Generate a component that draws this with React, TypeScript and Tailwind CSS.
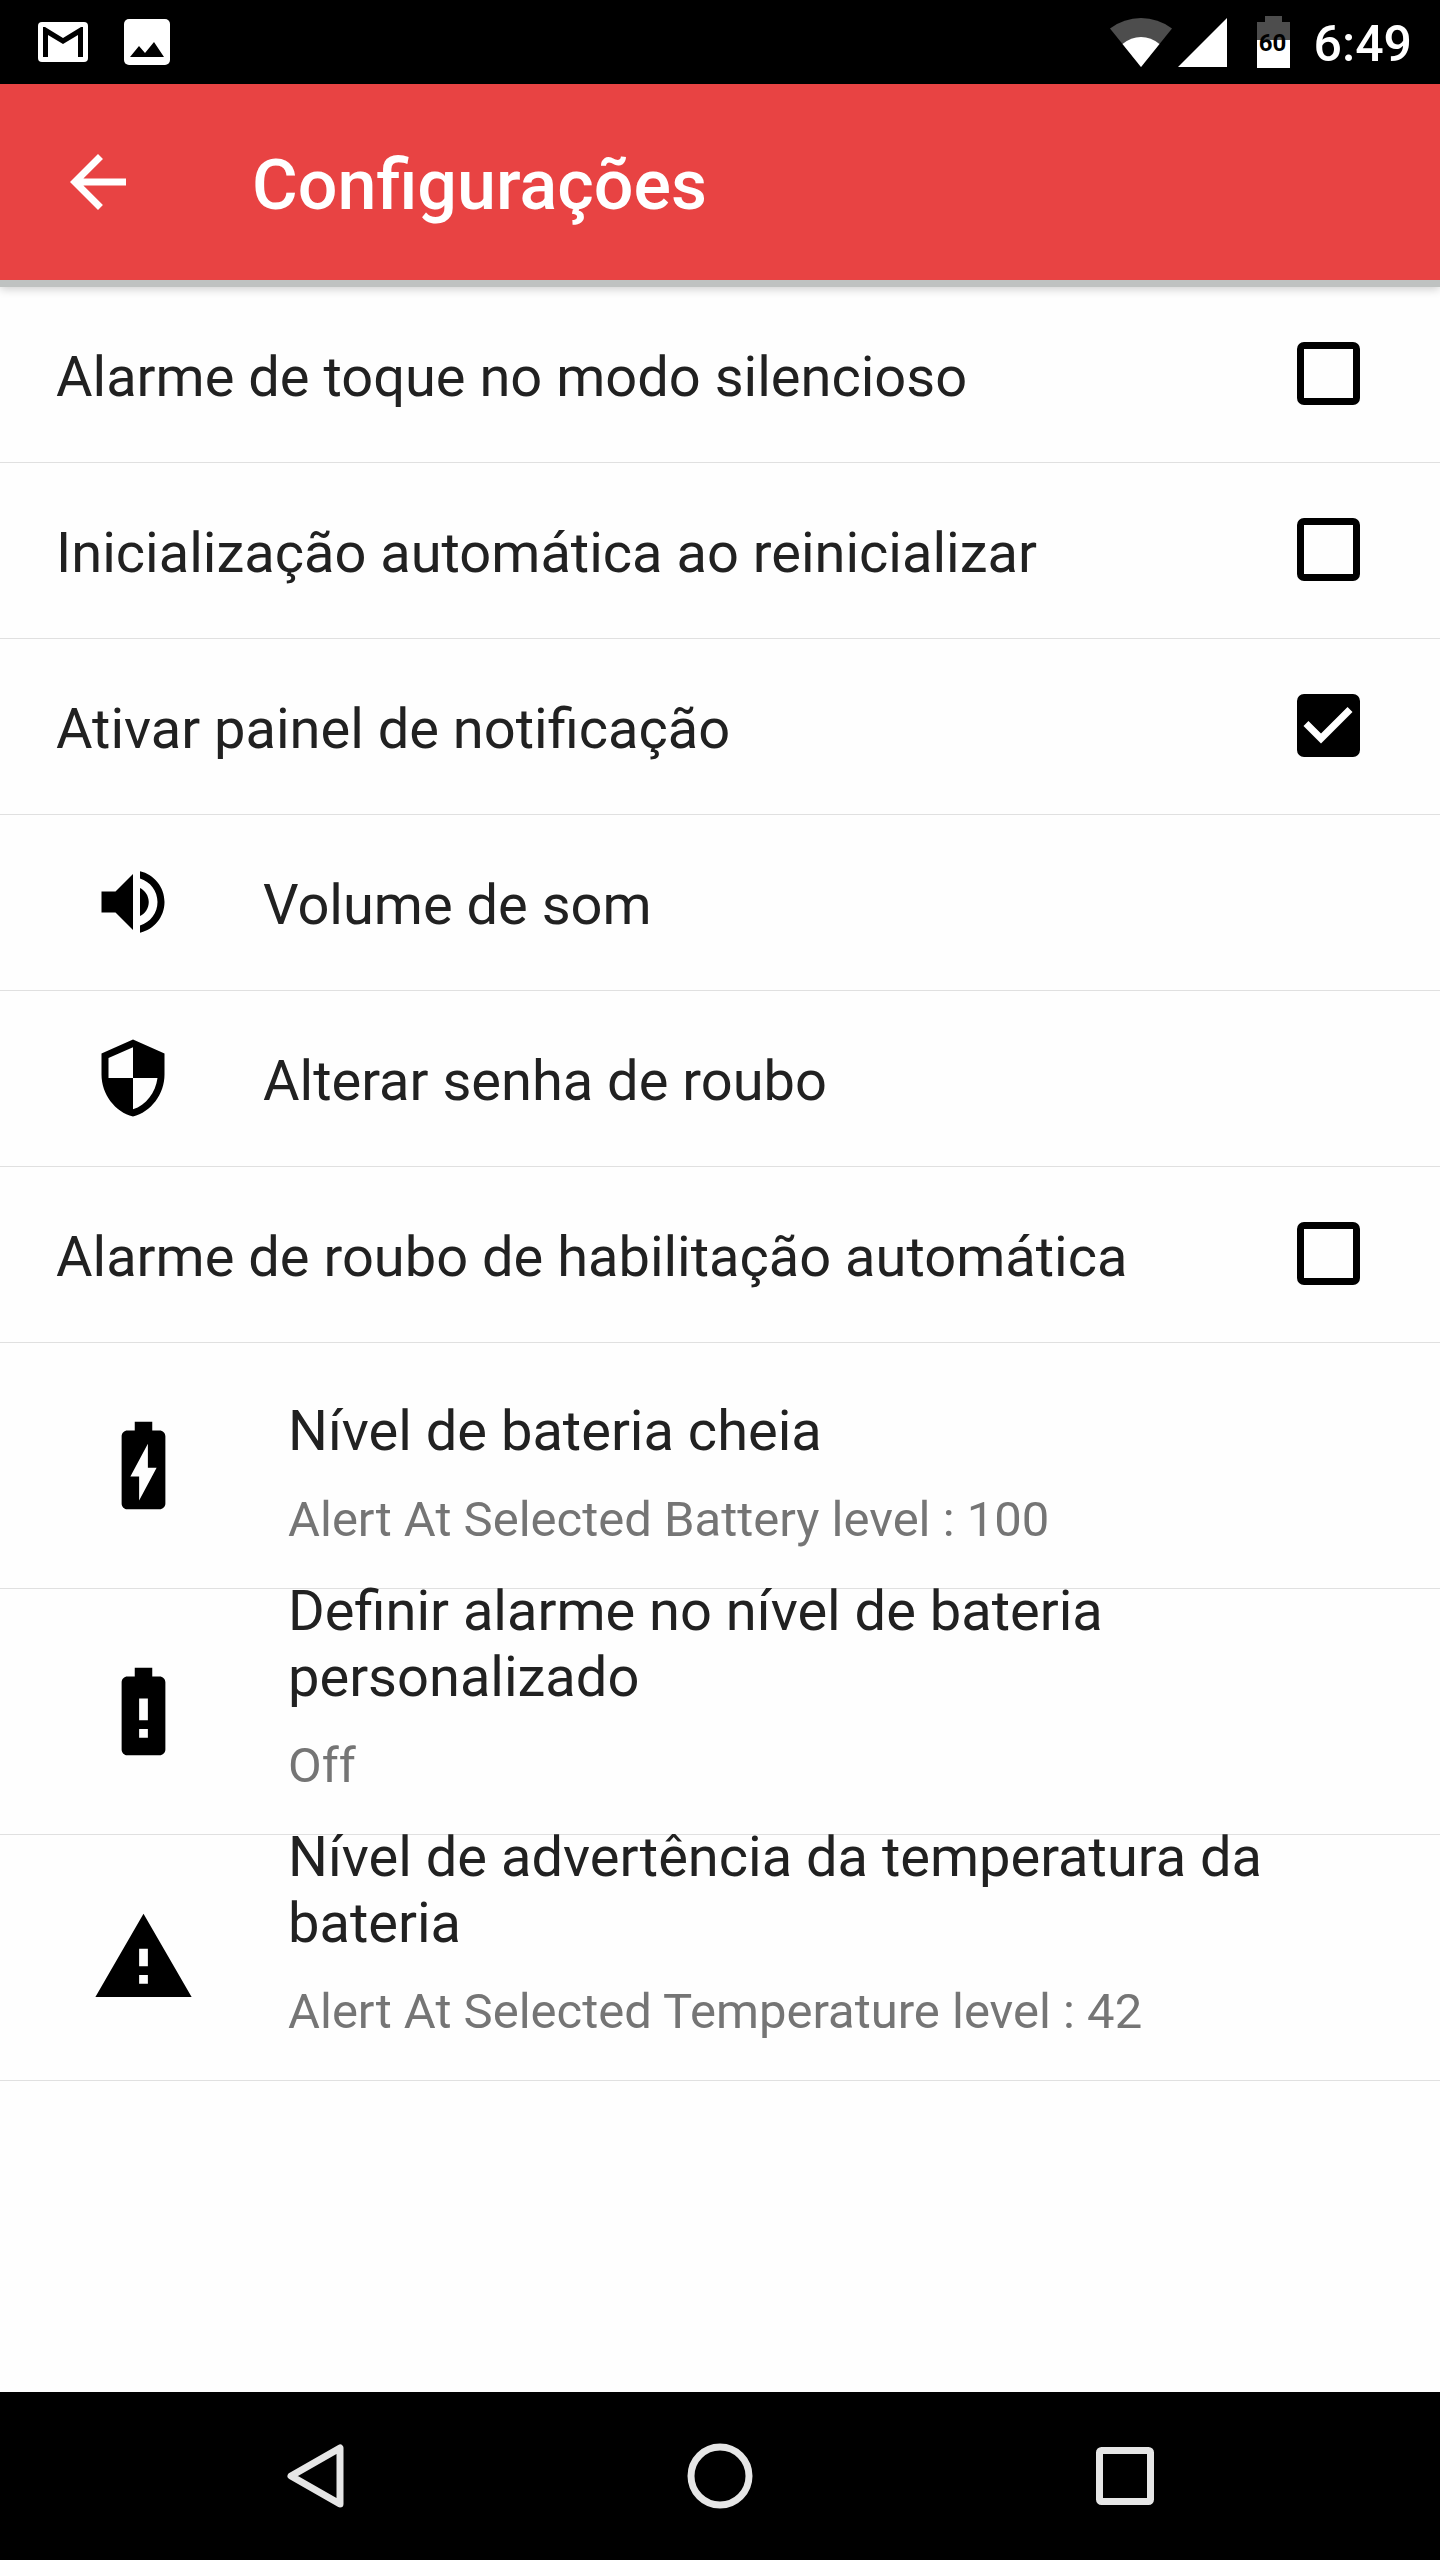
import { useState } from "react";
import type { ReactNode } from "react";

interface IconProps {
  path: string;
  className: string;
}

interface CheckItem {
  id: string;
  label: string;
}

const ICONS = {
  back: "M20 11H7.83l5.59-5.59L12 4l-8 8 8 8 1.41-1.41L7.83 13H20v-2z",
  check: "M10 17l-5-5 1.41-1.41L10 14.17l7.59-7.59L19 8l-9 9z",
  volume:
    "M3 9v6h4l5 5V4L7 9H3zm13.5 3c0-1.77-1.02-3.29-2.5-4.03v8.05c1.48-.73 2.5-2.25 2.5-4.02zM14 3.23v2.06c2.89.86 5 3.54 5 6.71s-2.11 5.85-5 6.71v2.06c4.01-.91 7-4.49 7-8.77s-2.99-7.86-7-8.77z",
  shield:
    "M12 1L3 5v6c0 5.55 3.84 10.74 9 12 5.16-1.26 9-6.45 9-12V5l-9-4zm0 10.99h7c-.53 4.12-3.28 7.79-7 8.94V12H5V6.3l7-3.11v8.8z",
  batteryCharging:
    "M15.67 4H14V2h-4v2H8.33C7.6 4 7 4.6 7 5.33v15.33C7 21.4 7.6 22 8.33 22h7.33c.74 0 1.34-.6 1.34-1.33V5.33C17 4.6 16.4 4 15.67 4zM11 20v-5.5H9L13 7v5.5h2L11 20z",
  batteryAlert:
    "M15.67 4H14V2h-4v2H8.33C7.6 4 7 4.6 7 5.33v15.33C7 21.4 7.6 22 8.33 22h7.33c.74 0 1.34-.6 1.34-1.33V5.33C17 4.6 16.4 4 15.67 4zM13 18h-2v-2h2v2zm0-4h-2V9h2v5z",
  warning: "M1 21h22L12 2 1 21zm12-3h-2v-2h2v2zm0-4h-2v-4h2v4z",
};

const SOUND_CHECKS: CheckItem[] = [
  { id: "silent-ring", label: "Alarme de toque no modo silencioso" },
  { id: "auto-start", label: "Inicialização automática ao reinicializar" },
  { id: "notification-panel", label: "Ativar painel de notificação" },
];

const LEVELS = [
  {
    icon: ICONS.batteryCharging,
    title: "Nível de bateria cheia",
    summary: "Alert At Selected Battery level : 100",
  },
  {
    icon: ICONS.batteryAlert,
    title: "Definir alarme no nível de bateria personalizado",
    summary: "Off",
  },
  {
    icon: ICONS.warning,
    title: "Nível de advertência da temperatura da bateria",
    summary: "Alert At Selected Temperature level : 42",
  },
];

function Icon({ path, className }: IconProps) {
  return (
    <svg aria-hidden="true" viewBox="0 0 24 24" fill="currentColor" className={`shrink-0 ${className}`}>
      <path d={path} />
    </svg>
  );
}

function StatusBar() {
  return (
    <div className="flex h-[84px] items-center justify-between bg-black pr-7 pl-[38px] text-white">
      <div className="flex items-center gap-9">
        {/* Mail */}
        <svg aria-hidden="true" viewBox="0 0 50 40" className="h-10 w-[50px]">
          <rect width="50" height="40" rx="4" fill="white" />
          <path d="M5 35V5h2l18 11L43 5h2v30h-5V13L25 22 10 13v22z" fill="black" />
        </svg>
        {/* Picture */}
        <svg aria-hidden="true" viewBox="0 0 46 46" className="size-[46px]">
          <rect width="46" height="46" rx="5" fill="white" />
          <path d="M6 38l9-11 6 7 9-11 10 15z" fill="black" />
        </svg>
      </div>

      <div className="flex items-center">
        {/* Wi-Fi */}
        <svg aria-hidden="true" viewBox="0 0 62 50" className="h-[50px] w-[62px]">
          <path d="M31 50L0 11.500Q14 1 31 1t31 10.500z" fill="#4d4d4d" />
          <path d="M31 50L12.500 27Q21 20 31 20t18.500 7z" fill="white" />
        </svg>
        {/* Mobile signal */}
        <svg aria-hidden="true" viewBox="0 0 50 50" className="ml-1.5 size-[50px]">
          <path d="M0 50L49 1v49z" fill="white" />
        </svg>
        {/* Battery */}
        <div className="relative ml-7 h-[52px] w-8.5">
          <svg aria-hidden="true" viewBox="0 0 34 52" className="size-full">
            <path d="M1 6h8V0h17v6h8v18H1z" fill="#4d4d4d" />
            <path d="M1 24h33v28H1z" fill="white" />
          </svg>
          <span className="absolute inset-x-0 top-3 text-center text-[24px]/[30px] font-bold text-black">60</span>
        </div>
        <time className="ml-6 pt-1 text-[50px]/[58px] font-medium">6:49</time>
      </div>
    </div>
  );
}

function CheckRow({ item, checked, onToggle }: { item: CheckItem; checked: boolean; onToggle: () => void }) {
  return (
    <li className="border-b border-[#e0e0e0]">
      <label htmlFor={item.id} className="flex min-h-[175px] items-center justify-between pr-20 pl-14">
        <span className="pt-1 text-[56px]/[66px]">{item.label}</span>
        <span className="grid shrink-0 place-items-center pb-0.5">
          <input
            id={item.id}
            type="checkbox"
            checked={checked}
            onChange={onToggle}
            className="col-start-1 row-start-1 size-[63px] appearance-none rounded-[7px] border-[7px] border-black checked:bg-black"
          />
          {checked && (
            <Icon path={ICONS.check} className="pointer-events-none col-start-1 row-start-1 -mx-2.5 size-[84px] text-white" />
          )}
        </span>
      </label>
    </li>
  );
}

function ActionRow({ icon, children }: { icon: string; children: ReactNode }) {
  return (
    <li className="border-b border-[#e0e0e0]">
      <button type="button" className="flex min-h-[175px] w-full items-center gap-22 px-[91px] text-left">
        <Icon path={icon} className="mb-0.5 size-[84px] text-black" />
        <span className="pt-1 text-[56px]/[66px]">{children}</span>
      </button>
    </li>
  );
}

function LevelRow({ icon, title, summary }: { icon: string; title: string; summary: string }) {
  return (
    <li className="border-b border-[#e0e0e0]">
      <button type="button" className="flex h-[245px] w-full items-center gap-[92px] px-[91px] text-left">
        <Icon path={icon} className="size-[105px] text-black" />
        <span className="flex h-full flex-1 flex-col justify-end gap-[27px] pb-[39px]">
          <span className="text-[56px]/[66px]">{title}</span>
          <span className="text-[49px]/[58px] text-[#757575]">{summary}</span>
        </span>
      </button>
    </li>
  );
}

export default function App() {
  const [checked, setChecked] = useState<Record<string, boolean>>({ "notification-panel": true });

  const toggle = (id: string) => setChecked((prev) => ({ ...prev, [id]: !prev[id] }));

  return (
    <div className="flex min-h-screen flex-col bg-[#fefefe] font-[Roboto,sans-serif] text-[#212121]">
      <StatusBar />

      {/* Toolbar */}
      <header className="flex h-[196px] items-center gap-28 bg-[#e84343] px-14 text-white shadow-[0_7px_0_#bfc2c1,0_9px_9px_rgba(0,0,0,0.2)]">
        <button type="button" aria-label="Voltar">
          <Icon path={ICONS.back} className="size-[84px]" />
        </button>
        <h1 className="pt-1.5 text-[70px]/[82px] font-medium">Configurações</h1>
      </header>

      {/* Settings */}
      <main className="flex-1 pt-[7px]">
        <ul>
          {SOUND_CHECKS.map((item) => (
            <CheckRow key={item.id} item={item} checked={!!checked[item.id]} onToggle={() => toggle(item.id)} />
          ))}
          <ActionRow icon={ICONS.volume}>Volume de som</ActionRow>
          <ActionRow icon={ICONS.shield}>Alterar senha de roubo</ActionRow>
          <CheckRow
            item={{ id: "auto-theft", label: "Alarme de roubo de habilitação automática" }}
            checked={!!checked["auto-theft"]}
            onToggle={() => toggle("auto-theft")}
          />
          {LEVELS.map((level) => (
            <LevelRow key={level.title} {...level} />
          ))}
        </ul>
      </main>

      {/* System navigation */}
      <nav className="grid h-[168px] grid-cols-3 place-items-center bg-black px-28 text-[#e6e6e6]">
        <button type="button" aria-label="Voltar">
          <svg aria-hidden="true" viewBox="0 0 66 66" className="size-[66px]" fill="none" stroke="currentColor" strokeWidth="7" strokeLinejoin="round">
            <path d="M58 5v56L9 33z" />
          </svg>
        </button>
        <button type="button" aria-label="Início">
          <svg aria-hidden="true" viewBox="0 0 66 66" className="size-[66px]" fill="none" stroke="currentColor" strokeWidth="7">
            <circle cx="33" cy="33" r="29" />
          </svg>
        </button>
        <button type="button" aria-label="Recentes">
          <svg aria-hidden="true" viewBox="0 0 66 66" className="size-[66px]" fill="none" stroke="currentColor" strokeWidth="7">
            <rect x="7.500" y="7.500" width="51" height="51" rx="2" />
          </svg>
        </button>
      </nav>
    </div>
  );
}
